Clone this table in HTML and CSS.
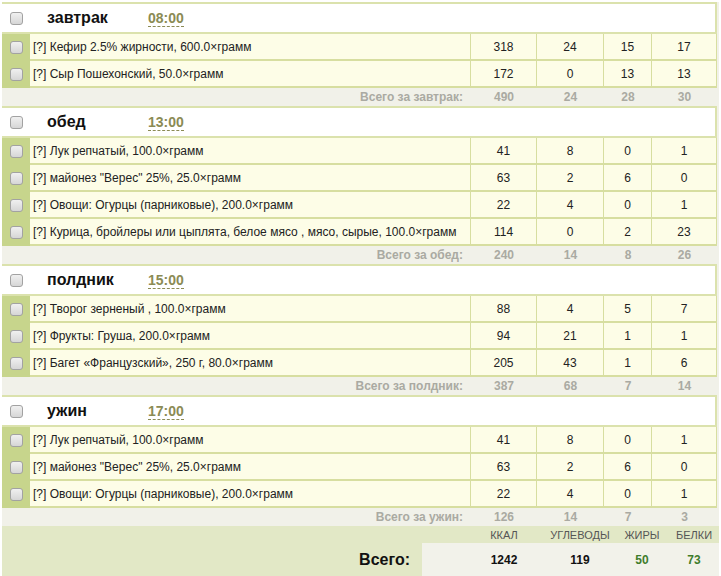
FILE: index.html
```html
<!DOCTYPE html>
<html lang="ru">
<head>
<meta charset="utf-8">
<title>Рацион</title>
<link rel="stylesheet" href="styles.css">
</head>
<body>
<div class="plan">

  <section class="meal">
    <div class="meal-head"><span class="cb-cell"><input type="checkbox" class="cb"></span><span class="meal-name">завтрак</span><span class="meal-time">08:00</span></div>
    <div class="item"><span class="cb-cell"><input type="checkbox" class="cb"></span><span class="name">[?] Кефир 2.5% жирности, 600.0×грамм</span><span class="num">318</span><span class="num">24</span><span class="num">15</span><span class="num">17</span></div>
    <div class="item"><span class="cb-cell"><input type="checkbox" class="cb"></span><span class="name">[?] Сыр Пошехонский, 50.0×грамм</span><span class="num">172</span><span class="num">0</span><span class="num">13</span><span class="num">13</span></div>
    <div class="subtotal"><span class="label">Всего за завтрак:</span><span class="sn">490</span><span class="sn">24</span><span class="sn">28</span><span class="sn">30</span></div>
  </section>

  <section class="meal">
    <div class="meal-head"><span class="cb-cell"><input type="checkbox" class="cb"></span><span class="meal-name">обед</span><span class="meal-time">13:00</span></div>
    <div class="item"><span class="cb-cell"><input type="checkbox" class="cb"></span><span class="name">[?] Лук репчатый, 100.0×грамм</span><span class="num">41</span><span class="num">8</span><span class="num">0</span><span class="num">1</span></div>
    <div class="item"><span class="cb-cell"><input type="checkbox" class="cb"></span><span class="name">[?] майонез "Верес" 25%, 25.0×грамм</span><span class="num">63</span><span class="num">2</span><span class="num">6</span><span class="num">0</span></div>
    <div class="item"><span class="cb-cell"><input type="checkbox" class="cb"></span><span class="name">[?] Овощи: Огурцы (парниковые), 200.0×грамм</span><span class="num">22</span><span class="num">4</span><span class="num">0</span><span class="num">1</span></div>
    <div class="item"><span class="cb-cell"><input type="checkbox" class="cb"></span><span class="name">[?] Курица, бройлеры или цыплята, белое мясо , мясо, сырые, 100.0×грамм</span><span class="num">114</span><span class="num">0</span><span class="num">2</span><span class="num">23</span></div>
    <div class="subtotal"><span class="label">Всего за обед:</span><span class="sn">240</span><span class="sn">14</span><span class="sn">8</span><span class="sn">26</span></div>
  </section>

  <section class="meal">
    <div class="meal-head"><span class="cb-cell"><input type="checkbox" class="cb"></span><span class="meal-name">полдник</span><span class="meal-time">15:00</span></div>
    <div class="item"><span class="cb-cell"><input type="checkbox" class="cb"></span><span class="name">[?] Творог зерненый , 100.0×грамм</span><span class="num">88</span><span class="num">4</span><span class="num">5</span><span class="num">7</span></div>
    <div class="item"><span class="cb-cell"><input type="checkbox" class="cb"></span><span class="name">[?] Фрукты: Груша, 200.0×грамм</span><span class="num">94</span><span class="num">21</span><span class="num">1</span><span class="num">1</span></div>
    <div class="item"><span class="cb-cell"><input type="checkbox" class="cb"></span><span class="name">[?] Багет «Французский», 250 г, 80.0×грамм</span><span class="num">205</span><span class="num">43</span><span class="num">1</span><span class="num">6</span></div>
    <div class="subtotal"><span class="label">Всего за полдник:</span><span class="sn">387</span><span class="sn">68</span><span class="sn">7</span><span class="sn">14</span></div>
  </section>

  <section class="meal">
    <div class="meal-head"><span class="cb-cell"><input type="checkbox" class="cb"></span><span class="meal-name">ужин</span><span class="meal-time">17:00</span></div>
    <div class="item"><span class="cb-cell"><input type="checkbox" class="cb"></span><span class="name">[?] Лук репчатый, 100.0×грамм</span><span class="num">41</span><span class="num">8</span><span class="num">0</span><span class="num">1</span></div>
    <div class="item"><span class="cb-cell"><input type="checkbox" class="cb"></span><span class="name">[?] майонез "Верес" 25%, 25.0×грамм</span><span class="num">63</span><span class="num">2</span><span class="num">6</span><span class="num">0</span></div>
    <div class="item"><span class="cb-cell"><input type="checkbox" class="cb"></span><span class="name">[?] Овощи: Огурцы (парниковые), 200.0×грамм</span><span class="num">22</span><span class="num">4</span><span class="num">0</span><span class="num">1</span></div>
    <div class="subtotal"><span class="label">Всего за ужин:</span><span class="sn">126</span><span class="sn">14</span><span class="sn">7</span><span class="sn">3</span></div>
  </section>

  <div class="grand">
    <span class="g-head g-c3">ККАЛ</span>
    <span class="g-head g-c4">УГЛЕВОДЫ</span>
    <span class="g-head g-c5">ЖИРЫ</span>
    <span class="g-head g-c6">БЕЛКИ</span>
    <span class="g-title">Всего:</span>
    <span class="g-box"></span>
    <span class="g-num g-c3">1242</span>
    <span class="g-num g-c4">119</span>
    <span class="g-num g-c5 g-green">50</span>
    <span class="g-num g-c6 g-green">73</span>
  </div>

</div>
</body>
</html>
```

FILE: styles.css
```css
html, body {
  margin: 0;
  padding: 0;
  background: #ffffff;
}

body {
  font-family: "Liberation Sans", Arial, sans-serif;
  font-size: 12px;
  color: #222;
}

.plan {
  margin: 2px 2px 0 2px;
  width: 717px;
  background: #f1f1e9;
}

.meal-head {
  display: flex;
  align-items: center;
  height: 28px;
  width: 713px;
  background: #ffffff;
  border: 2px solid #dbe2ad;
  border-left: 0;
}

.meal-head .cb-cell {
  width: 28px;
  background: transparent;
}

.meal-name {
  width: 101px;
  padding-left: 17px;
  font-size: 16px;
  font-weight: bold;
  color: #111;
}

.meal-time {
  font-size: 14px;
  font-weight: bold;
  color: #8b8b55;
  border-bottom: 1px dashed #8b8b55;
  line-height: 15px;
  margin-top: 2px;
}

.cb-cell {
  display: flex;
  align-items: center;
  justify-content: center;
  align-self: stretch;
  background: #c7d58c;
}

.cb {
  appearance: none;
  -webkit-appearance: none;
  margin: 0;
  width: 13px;
  height: 13px;
  border: 1px solid #a2a2a2;
  border-radius: 3px;
  background: linear-gradient(#f0f0f0, #d6d6d6);
  box-sizing: border-box;
}

.item {
  display: grid;
  grid-template-columns: 28px 441px 66px 67px 48px 65px;
  height: 27px;
  width: 715px;
}

.item .cb-cell {
  padding-left: 0;
}

.item .name,
.item .num {
  display: flex;
  align-items: center;
  background: #fdfde7;
  border-bottom: 2px solid #d7dea0;
  border-right: 1px solid #d7dea0;
}

.item .name {
  padding-left: 3px;
  white-space: nowrap;
  color: #222;
}

.item .num {
  justify-content: center;
  color: #222;
}

.subtotal {
  display: grid;
  grid-template-columns: 469px 66px 67px 48px 65px;
  height: 18px;
  align-items: center;
  font-weight: bold;
  color: #aaaaa2;
}

.subtotal .label {
  text-align: right;
  padding-right: 8px;
}

.subtotal .sn {
  text-align: center;
}

.grand {
  display: grid;
  grid-template-columns: 420px 49px 66px 86px 38px 58px;
  grid-template-rows: 17px 33px;
  background: #e2e8c6;
}

.g-head {
  grid-row: 1;
  font-size: 11px;
  color: #555;
  text-align: center;
  align-self: center;
}

.g-c3 { grid-column: 3; }
.g-c4 { grid-column: 4; }
.g-c5 { grid-column: 5; }
.g-c6 { grid-column: 6; padding-left: 8px; }

.g-title {
  grid-row: 2;
  grid-column: 1;
  text-align: right;
  padding-right: 12px;
  font-size: 16px;
  font-weight: bold;
  color: #111;
  align-self: center;
}

.g-box {
  grid-row: 2;
  grid-column: 2 / 7;
  background: #f2f2ea;
}

.g-num {
  grid-row: 2;
  text-align: center;
  align-self: center;
  font-weight: bold;
  font-size: 12px;
  color: #111;
}

.g-green {
  color: #3f7d2c;
}
```
